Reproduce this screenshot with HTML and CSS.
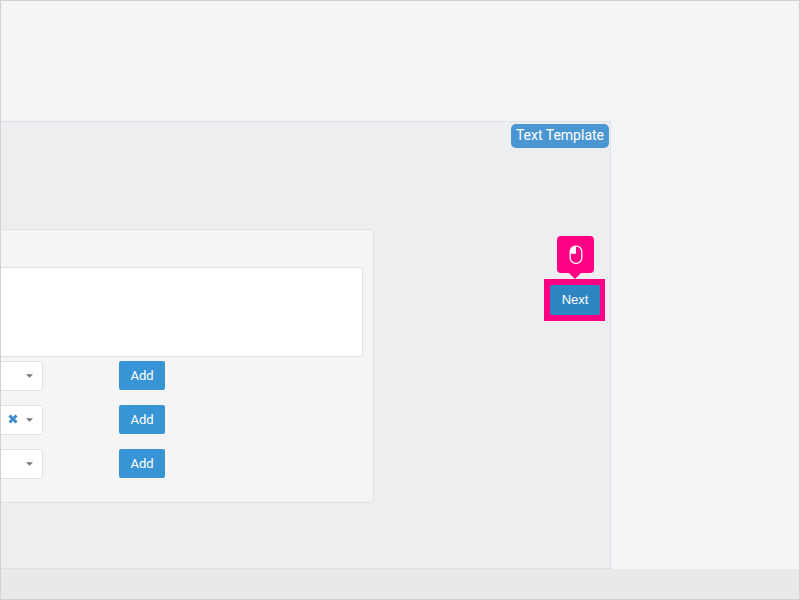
FILE: index.html
```
<!DOCTYPE html>
<html lang="en">
<head>
    <meta charset="UTF-8">
    <meta name="viewport" content="width=device-width, initial-scale=1.0">
    <title>Text Template</title>
    <link rel="stylesheet" href="styles.css">
</head>
<body>
    <main class="main">
        <section class="panel">
            <header class="panel-header">
                <span class="tag">Text Template</span>
            </header>
            <div class="panel-body">
                <form class="card">
                    <textarea class="text-box" aria-label="Text"></textarea>
                    <div class="row">
                        <div class="select-wrap">
                            <select class="select" aria-label="First field"></select>
                            <svg class="caret" viewBox="0 0 8 4"><path d="M0 0h8L4 4z"/></svg>
                        </div>
                        <button type="button" class="btn">Add</button>
                    </div>
                    <div class="row">
                        <div class="select-wrap">
                            <select class="select" aria-label="Second field"></select>
                            <button type="button" class="clear" aria-label="Clear">
                                <svg viewBox="0 0 10 10"><path d="M1.5 1.5l7 7M8.5 1.5l-7 7"/></svg>
                            </button>
                            <svg class="caret" viewBox="0 0 8 4"><path d="M0 0h8L4 4z"/></svg>
                        </div>
                        <button type="button" class="btn">Add</button>
                    </div>
                    <div class="row">
                        <div class="select-wrap">
                            <select class="select" aria-label="Third field"></select>
                            <svg class="caret" viewBox="0 0 8 4"><path d="M0 0h8L4 4z"/></svg>
                        </div>
                        <button type="button" class="btn">Add</button>
                    </div>
                </form>
                <div class="highlight">
                    <div class="callout">
                        <svg class="mouse" viewBox="0 0 14 20">
                            <rect x="1.2" y="1.2" width="11.6" height="17.2" rx="5.4"/>
                            <path class="mouse-button" d="M7 1.2v7.6H1.2V7A5.8 5.8 0 0 1 7 1.2z"/>
                        </svg>
                    </div>
                    <button type="button" class="btn btn-next">Next</button>
                </div>
            </div>
        </section>
    </main>
    <footer class="footer"></footer>
</body>
</html>
```
FILE: styles.css
```
* {
    box-sizing: border-box;
}
body {
    display: flex;
    flex-direction: column;
    min-height: 100vh;
    margin: 0;
    border: 1px solid #d0d1d3;
    background-color: #f3f4f6;
    font-family: Roboto, sans-serif;
    font-size: 13px;
}
.main {
    flex: 1;
    display: flex;
    padding-top: 120px;
    padding-right: 188px;
}
.panel {
    flex: 1;
    border: 1px solid #dee0e5;
    border-left: none;
    background-color: #eceef0;
}
.panel-header {
    display: flex;
    justify-content: flex-end;
    height: 107px;
    padding: 2px 1px 0 0;
}
.tag {
    height: 24px;
    padding: 0 5px;
    border-radius: 5px;
    background-color: #4a96d2;
    color: #fff;
    font-size: 14px;
    line-height: 23px;
}
.panel-body {
    display: flex;
    gap: 170px;
    align-items: flex-start;
    padding-right: 5px;
}
.card {
    flex: 1;
    padding: 37px 10px 23px 0;
    border: 1px solid #dfe1e5;
    border-left: none;
    border-radius: 0 5px 5px 0;
    background-color: #f5f5f5;
}
.text-box {
    display: block;
    width: 100%;
    height: 90px;
    margin-bottom: 4px;
    border: 1px solid #dddfe0;
    border-left: none;
    border-radius: 0 2px 2px 0;
    background-color: #fff;
    resize: none;
}
.row {
    display: flex;
    gap: 76px;
    margin-bottom: 14px;
}
.row:last-child {
    margin-bottom: 0;
}
.select-wrap {
    position: relative;
    width: 42px;
}
.select {
    display: block;
    width: 100%;
    height: 30px;
    border: 1px solid #e3e4e5;
    border-left: none;
    border-radius: 0 2px 2px 0;
    background-color: #fff;
    appearance: none;
}
.caret {
    position: absolute;
    top: 13px;
    right: 10px;
    width: 7px;
    height: 4px;
    fill: #777;
    pointer-events: none;
}
.clear {
    position: absolute;
    top: 9px;
    left: 7px;
    width: 10px;
    height: 10px;
    padding: 0;
    border: none;
    background: none;
}
.clear svg {
    display: block;
    stroke: #428bca;
    stroke-width: 3;
}
.btn {
    width: 46px;
    height: 29px;
    padding: 0;
    border: none;
    border-radius: 2px;
    background-color: #3795d6;
    color: #fff;
    font-family: inherit;
    font-size: 13px;
    cursor: pointer;
}
.btn-next {
    display: block;
    width: 50px;
    height: 30px;
    padding-bottom: 2px;
    background-color: #2d86c1;
    font-family: "Liberation Sans", Arial, sans-serif;
}
.highlight {
    position: relative;
    margin-top: 50px;
    padding: 6px 5px 6px 6px;
    background-color: #ff0084;
}
/* pointer hint above the highlighted button */
.callout {
    position: absolute;
    bottom: 48px;
    left: 13px;
    display: flex;
    justify-content: center;
    align-items: center;
    width: 37px;
    height: 37px;
    border-radius: 4px;
    background-color: #ff0084;
}
.callout::after {
    content: "";
    position: absolute;
    top: 100%;
    left: 12px;
    border: 6px solid transparent;
    border-top-color: #ff0084;
    border-bottom: none;
}
.mouse {
    width: 14px;
    height: 20px;
    fill: none;
    stroke: #fff;
    stroke-width: 1.3;
}
.mouse-button {
    fill: #fff;
    stroke: none;
}
.footer {
    height: 30px;
    background-color: #e9e9e9;
}
```
